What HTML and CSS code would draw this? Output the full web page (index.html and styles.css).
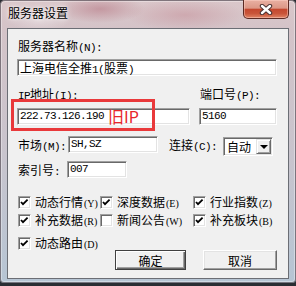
FILE: index.html
```html
<!DOCTYPE html>
<html lang="zh-CN">
<head>
    <meta charset="UTF-8">
    <title>服务器设置</title>
    <link rel="stylesheet" href="styles.css">
</head>
<body>
    <div class="window">
        <div class="titlebar">
            <span class="title">服务器设置</span>
            <div class="close-btn">
                <svg width="14" height="11" viewBox="0 0 14 11">
                    <path d="M3 2 L11 9 M11 2 L3 9" stroke="#4a3232" stroke-width="4.4" stroke-linecap="round"/>
                    <path d="M3 2 L11 9 M11 2 L3 9" stroke="#fff" stroke-width="2.4" stroke-linecap="round"/>
                </svg>
            </div>
        </div>

        <div class="client">
            <div class="label">服务器名称<span class="en">(N):</span></div>
            <div class="field name-field">上海电信全推<span class="en">1(</span>股票<span class="en">)</span></div>

            <div class="row ip-row">
                <div class="ip-col">
                    <div class="label"><span class="en">IP</span>地址<span class="en">(I):</span></div>
                    <div class="field mono">222.73.126.190</div>
                </div>
                <div class="port-col">
                    <div class="label">端口号<span class="en">(P):</span></div>
                    <div class="field mono">5160</div>
                </div>
                <!-- annotation drawn over the screenshot -->
                <div class="mark"><span class="mark-text">旧IP</span></div>
            </div>

            <div class="row market-row">
                <div class="label">市场<span class="en">(M):</span></div>
                <div class="field mono market-field">SH,SZ</div>
                <div class="label conn-label">连接<span class="en">(C):</span></div>
                <div class="select">
                    <span class="select-text">自动</span>
                    <div class="drop-btn"><span class="arrow"></span></div>
                </div>
            </div>

            <div class="row index-row">
                <div class="label">索引号<span class="en">:</span></div>
                <div class="field mono index-field">007</div>
            </div>

            <div class="checks">
                <div class="check"><span class="box on"></span><span>动态行情<span class="en">(Y)</span></span></div>
                <div class="check"><span class="box on"></span><span>深度数据<span class="en">(E)</span></span></div>
                <div class="check"><span class="box on"></span><span>行业指数<span class="en">(Z)</span></span></div>
                <div class="check"><span class="box on"></span><span>补充数据<span class="en">(R)</span></span></div>
                <div class="check"><span class="box"></span><span>新闻公告<span class="en">(W)</span></span></div>
                <div class="check"><span class="box on"></span><span>补充板块<span class="en">(B)</span></span></div>
            </div>

            <div class="last-row">
                <div class="check"><span class="box on"></span><span>动态路由<span class="en">(D)</span></span></div>
                <div class="buttons">
                    <div class="btn default">确定</div>
                    <div class="btn cancel">取消</div>
                </div>
            </div>
        </div>
    </div>
</body>
</html>
```

FILE: styles.css
```css
body {
    margin: 0;
    background: #2a2d33;
    font-family: "Noto Sans CJK SC", sans-serif;
    font-size: 12px;
    color: #000;
}

.window {
    width: 296px;
    height: 283px;
    box-sizing: border-box;
    padding: 0 7px 4px;
    display: flex;
    flex-direction: column;
    border-radius: 5px 5px 4px 4px;
    background:
        radial-gradient(45px 14px at 100px 9px, rgba(180, 115, 128, 0.55), transparent),
        radial-gradient(60px 16px at 185px 15px, rgba(195, 135, 145, 0.45), transparent),
        radial-gradient(30px 12px at 40px 20px, rgba(235, 225, 228, 0.6), transparent),
        linear-gradient(180deg, #dac7ca 0, #d4c3c8 30px, #c8c4cd 55%, #b6c5d4 100%);
    box-shadow: inset 0 0 0 1px rgba(60, 50, 60, 0.6), inset 0 0 0 2px rgba(255, 255, 255, 0.35);
}

.titlebar {
    height: 28px;
    display: flex;
    justify-content: space-between;
    align-items: flex-start;
}

.title {
    margin: 6px 0 0 1px;
    line-height: 14px;
    text-shadow: 0 0 6px rgba(255, 255, 255, 0.9), 0 0 3px rgba(255, 255, 255, 0.8);
}

.close-btn {
    width: 46px;
    height: 19px;
    box-sizing: border-box;
    border: 1px solid #5b2a24;
    border-top: none;
    border-radius: 0 0 5px 5px;
    background: linear-gradient(#e9b0a2, #dc9786 45%, #c4482f 52%, #c9553a 75%, #e08466);
    box-shadow: inset 0 0 0 1px rgba(255, 215, 205, 0.45);
    display: flex;
    align-items: center;
    justify-content: center;
}

.client {
    height: 251px;
    box-sizing: border-box;
    background: #f0f0f0;
    border: 1px solid #6b6e75;
    padding: 10px 11px 0 9px;
}

.label {
    line-height: 14px;
    padding-left: 1px;
    white-space: nowrap;
}

/* half-width latin, 6px per char like the dialog font */
.en,
.field.mono {
    font-family: "Liberation Mono", monospace;
    font-size: 11px;
    letter-spacing: -0.6px;
}

.field {
    height: 17px;
    box-sizing: border-box;
    background: #fff;
    border: 1px solid;
    border-color: #a0a0a0 #fff #fff #a0a0a0;
    box-shadow: inset 1px 1px 0 #696969, inset -1px -1px 0 #e3e3e3;
    padding: 0 2px;
    line-height: 15px;
    white-space: nowrap;
    overflow: hidden;
}

.name-field {
    margin-top: 4px;
}

.row {
    display: flex;
}

.ip-row {
    margin-top: 11px;
    gap: 9px;
    position: relative;
}

.ip-col {
    width: 173px;
}

.port-col {
    width: 78px;
}

.ip-row .field {
    margin-top: 5px;
}

.mark {
    position: absolute;
    left: -6px;
    top: 12px;
    width: 144px;
    height: 32px;
    box-sizing: border-box;
    border: 3px solid #e9393b;
}

.mark-text {
    position: absolute;
    left: 94px;
    top: 5px;
    color: #e8262b;
    font-size: 16px;
    line-height: 18px;
}

.market-row {
    margin-top: 10px;
    height: 21px;
    align-items: flex-start;
}

.market-row .label {
    margin-top: 3px;
}

.market-field {
    width: 90px;
    margin: 1px 0 0 2px;
}

.market-row .conn-label {
    margin-left: 10px;
}

.select {
    width: 50px;
    height: 19px;
    box-sizing: border-box;
    margin: 2px 0 0 6px;
    background: #fff;
    border: 1px solid;
    border-color: #a0a0a0 #fff #fff #a0a0a0;
    box-shadow: inset 1px 1px 0 #696969, inset -1px -1px 0 #e3e3e3;
    display: flex;
    justify-content: space-between;
    align-items: center;
}

.select-text {
    padding-left: 3px;
    line-height: 14px;
}

.drop-btn {
    width: 15px;
    height: 15px;
    box-sizing: border-box;
    margin-right: 1px;
    background: #f0f0f0;
    border: 1px solid;
    border-color: #e3e3e3 #696969 #696969 #e3e3e3;
    box-shadow: inset 1px 1px 0 #fff, inset -1px -1px 0 #a0a0a0;
    display: flex;
    align-items: center;
    justify-content: center;
}

.arrow {
    width: 0;
    height: 0;
    border-left: 4px solid transparent;
    border-right: 4px solid transparent;
    border-top: 4px solid #000;
    margin-top: 1px;
}

.index-row {
    margin-top: 5px;
}

.index-row .label {
    margin-top: 2px;
}

.index-field {
    width: 60px;
    margin-left: 7px;
}

.checks {
    margin-top: 17px;
    padding-left: 1px;
    display: grid;
    grid-template-columns: 82px 93px 1fr;
    grid-auto-rows: 18px;
}

.check {
    display: flex;
    align-items: center;
    gap: 4px;
    height: 13px;
    line-height: 13px;
    white-space: nowrap;
}

.check .en {
    font-family: "Liberation Serif", serif;
    font-size: 10px;
    letter-spacing: 0;
    margin-left: 1px;
}

.box {
    width: 13px;
    height: 13px;
    flex: none;
    box-sizing: border-box;
    background: #fff;
    border: 1px solid;
    border-color: #a0a0a0 #fff #fff #a0a0a0;
    box-shadow: inset 1px 1px 0 #696969, inset -1px -1px 0 #e3e3e3;
}

.box.on {
    background: #fff url("data:image/svg+xml;utf8,<svg xmlns='http://www.w3.org/2000/svg' width='13' height='13' viewBox='0 0 13 13'><path d='M3 6 L5 8.2 L9.6 3.6' fill='none' stroke='black' stroke-width='1.8'/></svg>") no-repeat -1px -1px;
}

.last-row {
    margin-top: 5px;
    padding-left: 1px;
    display: flex;
    justify-content: space-between;
    align-items: flex-start;
}

.buttons {
    display: flex;
    gap: 17px;
    margin-top: 13px;
}

.btn {
    width: 71px;
    height: 20px;
    box-sizing: border-box;
    background: #f0f0f0;
    border: 1px solid;
    border-color: #fff #696969 #696969 #fff;
    box-shadow: inset -1px -1px 0 #a0a0a0, inset 1px 1px 0 #e3e3e3;
    display: flex;
    align-items: center;
    justify-content: center;
}

.btn.default {
    border-color: #404040;
    box-shadow: inset 1px 1px 0 #fff, inset -1px -1px 0 #696969, inset -2px -2px 0 #a0a0a0;
}

.btn.cancel {
    width: 74px;
}
```
